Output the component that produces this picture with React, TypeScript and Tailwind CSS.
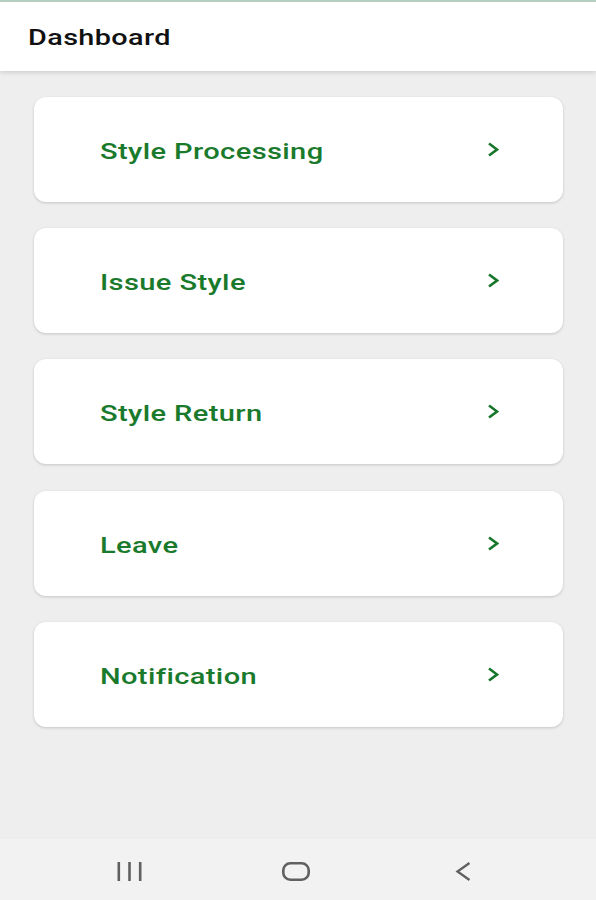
import React from "react";

const items = ["Style Processing", "Issue Style", "Style Return", "Leave", "Notification"];

function Chevron() {
  return (
    <svg width="12" height="15" viewBox="0 0 12 15" fill="none">
      <path d="M2 1.5 L10 7.5 L2 13.5" stroke="#17762a" strokeWidth="2.6" strokeLinecap="butt" strokeLinejoin="miter" />
    </svg>
  );
}

export default function App() {
  return (
    <div className="w-[596px] h-[900px] bg-[#eeeeee] flex flex-col overflow-hidden" style={{ fontFamily: "Roboto, 'Liberation Sans', sans-serif" }}>
      <div className="h-[2px] bg-[#b8cfc3]" />
      <div className="h-[69px] bg-white flex items-center pl-[28px] shadow-[0_2px_4px_rgba(0,0,0,0.12)] relative z-10">
        <span className="text-[22px] font-medium text-[#111] tracking-[0.3px] scale-x-[1.31] origin-left inline-block mt-[1px]">Dashboard</span>
      </div>
      <div className="flex-1 flex flex-col gap-[26px] pt-[26px] px-[34px] pr-[33px]">
        {items.map((t, i) => (
          <div
            key={t}
            className={
              "h-[105px] bg-white rounded-[12px] shadow-[0_1px_3px_rgba(0,0,0,0.18)] flex items-center pl-[66px] pr-[64px] justify-between " +
              (i === 3 ? "mt-[1px]" : "")
            }
          >
            <span className="text-[22px] font-medium text-[#1a7a2c] tracking-[0.3px] scale-x-[1.32] origin-left inline-block mt-[3px]">{t}</span>
            <Chevron />
          </div>
        ))}
      </div>
      <div className="h-[61px] bg-[#f2f2f2] flex items-start pl-[117px] pt-[23px]">
        <svg width="25" height="19" viewBox="0 0 25 19">
          <rect x="0.5" y="0" width="2.6" height="19" fill="#606060" />
          <rect x="11.2" y="0" width="2.6" height="19" fill="#606060" />
          <rect x="21.9" y="0" width="2.6" height="19" fill="#606060" />
        </svg>
        <svg width="28" height="19" viewBox="0 0 28 19" className="ml-[140px]">
          <rect x="1.3" y="1.3" width="25.4" height="16.4" rx="7" fill="none" stroke="#606060" strokeWidth="2.6" />
        </svg>
        <svg width="16" height="19" viewBox="0 0 16 19" className="ml-[145px]">
          <path d="M14.5 1 L2.5 9.5 L14.5 18" fill="none" stroke="#606060" strokeWidth="2.3" />
        </svg>
      </div>
    </div>
  );
}
